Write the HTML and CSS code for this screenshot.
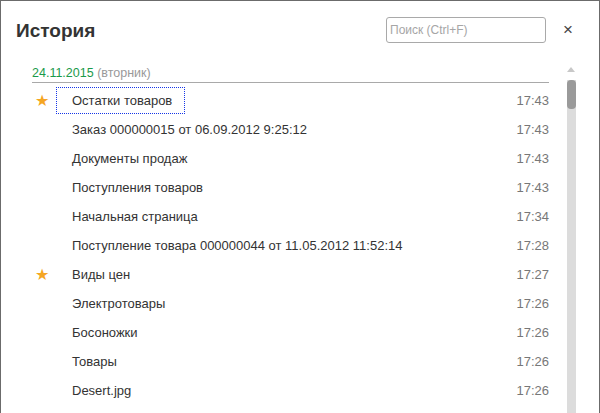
FILE: index.html
```html
<!DOCTYPE html>
<html lang="ru">
<head>
<meta charset="utf-8">
<title>История</title>
<link rel="stylesheet" href="styles.css">
</head>
<body>
<div class="window">
  <div class="header">
    <div class="title">История</div>
    <input class="search" type="text" placeholder="Поиск (Ctrl+F)">
    <div class="close">×</div>
  </div>
  <div class="body">
    <div class="list">
      <div class="date"><span class="date-val">24.11.2015</span> <span class="weekday">(вторник)</span></div>
      <div class="row"><span class="star">★</span><span class="name focused">Остатки товаров</span><span class="time">17:43</span></div>
      <div class="row"><span class="star"></span><span class="name">Заказ 000000015 от 06.09.2012 9:25:12</span><span class="time">17:43</span></div>
      <div class="row"><span class="star"></span><span class="name">Документы продаж</span><span class="time">17:43</span></div>
      <div class="row"><span class="star"></span><span class="name">Поступления товаров</span><span class="time">17:43</span></div>
      <div class="row"><span class="star"></span><span class="name">Начальная страница</span><span class="time">17:34</span></div>
      <div class="row"><span class="star"></span><span class="name">Поступление товара 000000044 от 11.05.2012 11:52:14</span><span class="time">17:28</span></div>
      <div class="row"><span class="star">★</span><span class="name">Виды цен</span><span class="time">17:27</span></div>
      <div class="row"><span class="star"></span><span class="name">Электротовары</span><span class="time">17:26</span></div>
      <div class="row"><span class="star"></span><span class="name">Босоножки</span><span class="time">17:26</span></div>
      <div class="row"><span class="star"></span><span class="name">Товары</span><span class="time">17:26</span></div>
      <div class="row"><span class="star"></span><span class="name">Desert.jpg</span><span class="time">17:26</span></div>
    </div>
    <div class="scrollbar">
      <div class="arrow"></div>
      <div class="track"><div class="thumb"></div></div>
    </div>
  </div>
</div>
</body>
</html>
```
FILE: styles.css
```css
html, body {
  margin: 0;
  padding: 0;
  background: #fff;
  overflow: hidden;
}
.window {
  box-sizing: border-box;
  width: 600px;
  height: 413px;
  border: 1px solid #6b6b6b;
  border-bottom: none;
  font-family: "Liberation Sans", Arial, sans-serif;
  color: #333;
  overflow: hidden;
}
.header {
  display: flex;
  align-items: center;
  height: 42px;
  padding: 16px 9px 0 15px;
  box-sizing: border-box;
}
.title {
  font-size: 19px;
  font-weight: bold;
  color: #333;
  flex: 1;
  margin-top: 1px;
}
.search {
  box-sizing: border-box;
  width: 160px;
  height: 26px;
  border: 1px solid #a9a9a9;
  border-radius: 3px;
  padding: 0 3px;
  font-family: "Liberation Sans", Arial, sans-serif;
  font-size: 12px;
  outline: none;
}
.search::placeholder {
  color: #a6a6a6;
}
.close {
  width: 44px;
  text-align: center;
  font-size: 17px;
  color: #444;
}
.body {
  display: flex;
  padding-top: 22px;
}
.list {
  flex: 1;
  padding-left: 31px;
  padding-right: 0;
}
.date {
  font-size: 12.5px;
  height: 17px;
  line-height: 16px;
  border-bottom: 1px solid #a9a9a9;
}
.date-val {
  color: #1a9a4a;
}
.weekday {
  color: #999;
}
.row {
  display: flex;
  align-items: center;
  height: 29px;
  font-size: 13px;
}
.date + .row {
  margin-top: 3px;
}
.star {
  width: 25px;
  color: #f5a623;
  font-size: 16px;
  text-indent: 3px;
}
.name {
  flex: 1;
  padding: 5px 0 5px 15px;
  border: 1px solid transparent;
  margin-left: -1px;
}
.name.focused {
  flex: none;
  width: 112px;
  background:
    linear-gradient(90deg, #1535e8 50%, transparent 50%) top left / 2px 1px repeat-x,
    linear-gradient(90deg, #1535e8 50%, transparent 50%) bottom left / 2px 1px repeat-x,
    linear-gradient(180deg, #1535e8 50%, transparent 50%) top left / 1px 2px repeat-y,
    linear-gradient(180deg, #1535e8 50%, transparent 50%) top right / 1px 2px repeat-y;
  background-origin: border-box;
  background-clip: border-box;
}
.time {
  margin-left: auto;
  color: #777;
}
.scrollbar {
  width: 52px;
  display: flex;
  flex-direction: column;
  align-items: center;
  padding-top: 2px;
  margin-left: -2px;
  box-sizing: border-box;
  padding-right: 4px;
}
.arrow {
  width: 0;
  height: 0;
  border-left: 4px solid transparent;
  border-right: 4px solid transparent;
  border-bottom: 5px solid #c8c8c8;
  margin-bottom: 8px;
}
.track {
  width: 9px;
  height: 400px;
  background: #dcdcdc;
}
.thumb {
  width: 9px;
  height: 29px;
  border-radius: 4px;
  background: #9a9a9a;
}
```
